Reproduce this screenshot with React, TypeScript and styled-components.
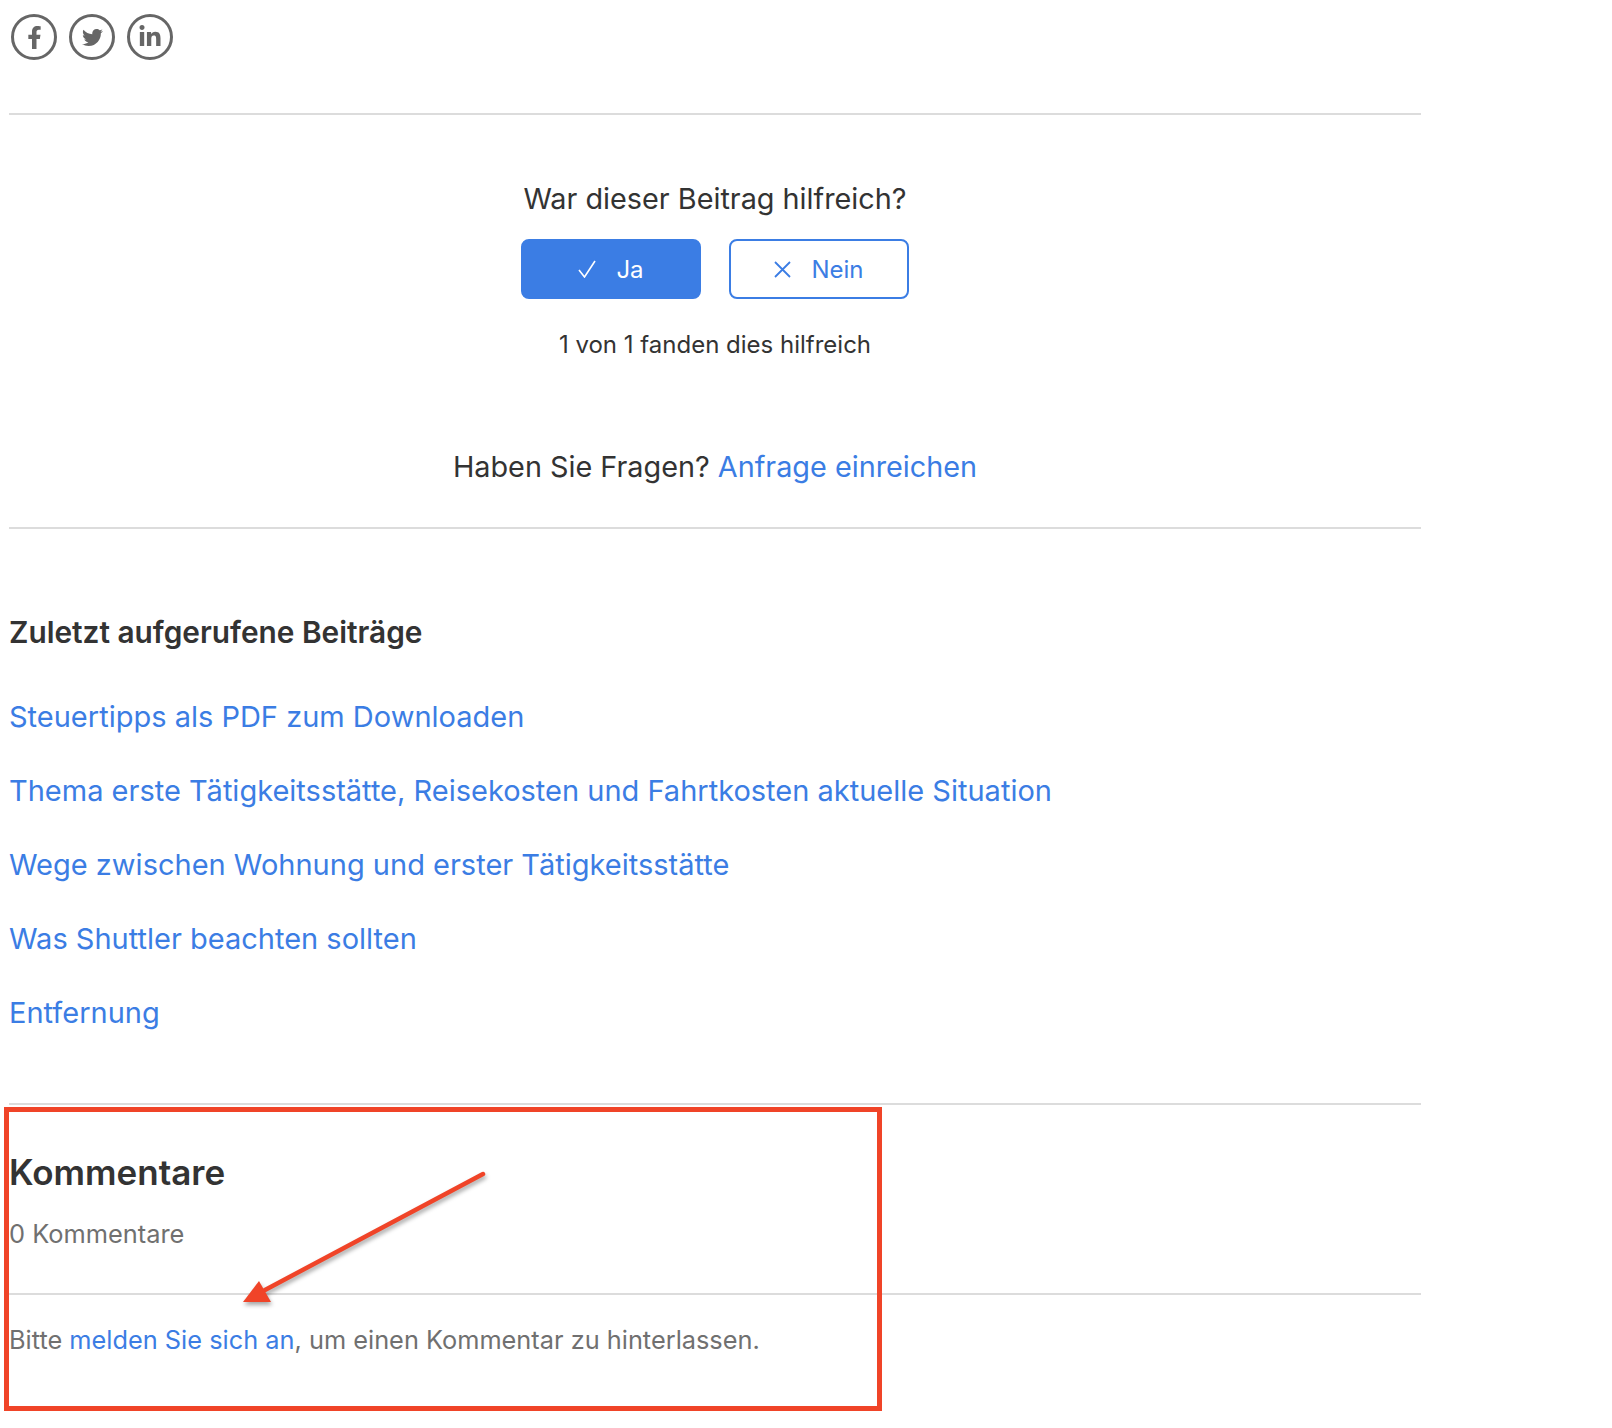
import React from 'react';
import styled, { createGlobalStyle } from 'styled-components';
import { FaFacebookF, FaLinkedinIn, FaTwitter } from 'react-icons/fa';

const GlobalStyle = createGlobalStyle`
  html, body {
    margin: 0;
    background: #fff;
    font-family: Inter, "Noto Sans", sans-serif;
    color: #333;
  }
`;

const blue = '#3b7de4';

const Page = styled.div`
  position: relative;
  width: 1412px;
  height: 1428px;
  margin-left: 9px;
`;

const ShareRow = styled.div`
  display: flex;
  gap: 12px;
  padding: 14px 0 53px 2px;
`;

const ShareIcon = styled.a<{ $size: number }>`
  display: flex;
  align-items: center;
  justify-content: center;
  box-sizing: border-box;
  width: 46px;
  height: 46px;
  border: 3px solid #666;
  border-radius: 50%;
  color: #666;
  font-size: ${(p) => p.$size}px;
`;

const Rule = styled.hr`
  margin: 0;
  border: 0;
  height: 2px;
  background: #dcdcdc;
`;

const Vote = styled.section`
  display: flex;
  flex-direction: column;
  align-items: center;
  padding-top: 64px;
`;

const Question = styled.h2`
  margin: 0;
  font-size: 28.8px;
  font-weight: 400;
  line-height: 40px;
`;

const Buttons = styled.div`
  display: flex;
  gap: 28px;
  margin-top: 20px;
`;

const VoteButton = styled.button<{ $primary?: boolean }>`
  display: flex;
  align-items: center;
  justify-content: center;
  gap: 20px;
  box-sizing: border-box;
  width: 180px;
  height: 60px;
  padding: 0;
  border: 2px solid ${blue};
  border-radius: 8px;
  background: ${(p) => (p.$primary ? blue : '#fff')};
  color: ${(p) => (p.$primary ? '#fff' : blue)};
  font-family: inherit;
  font-size: 24px;
`;

const VoteCount = styled.p`
  margin: 30px 0 0;
  font-size: 24px;
  line-height: 32px;
`;

const AskLine = styled.p`
  margin: 85.5px 0 40.5px;
  font-size: 28.8px;
  line-height: 40px;
  text-align: center;
`;

const Link = styled.a`
  color: ${blue};
  text-decoration: none;
`;

const Recent = styled.section`
  padding: 83.4px 0 70.6px;
`;

const RecentTitle = styled.h3`
  margin: 0 0 44.4px;
  font-size: 29.8px;
  font-weight: 600;
  line-height: 40px;
`;

const RecentList = styled.ul`
  display: flex;
  flex-direction: column;
  gap: 34px;
  margin: 0;
  padding: 0;
  list-style: none;
  font-size: 29px;
  line-height: 40px;
`;

const Comments = styled.section`
  color: #707070;
`;

const CommentsTitle = styled.h2`
  margin: 0;
  padding-top: 43px;
  color: #333;
  font-size: 35px;
  font-weight: 600;
  line-height: 48px;
`;

const CommentCount = styled.p`
  margin: 20px 0 40.5px;
  font-size: 25.4px;
  line-height: 36px;
`;

const CommentHint = styled.p`
  margin: 27px 0 0;
  font-size: 25.35px;
  line-height: 36px;
`;

// the red annotation on top of the screenshot
const Highlight = styled.div`
  position: absolute;
  left: -5px;
  top: 1107px;
  box-sizing: border-box;
  width: 878px;
  height: 304px;
  border: 5px solid #f04428;
`;

const Arrow = styled.svg`
  position: absolute;
  left: 211px;
  top: 1160px;
  overflow: visible;
  filter: drop-shadow(1px 3px 2px rgba(0, 0, 0, 0.35));
`;

const CheckIcon = () => (
  <svg width="18" height="18" viewBox="0 0 18 18" fill="none" stroke="currentColor" strokeWidth="1.6">
    <path d="M1 10L6.5 17L17 1" />
  </svg>
);

const CrossIcon = () => (
  <svg width="17" height="17" viewBox="0 0 17 17" fill="none" stroke="currentColor" strokeWidth="1.8">
    <path d="M1 1L16 16M16 1L1 16" />
  </svg>
);

const recent = [
  'Steuertipps als PDF zum Downloaden',
  'Thema erste Tätigkeitsstätte, Reisekosten und Fahrtkosten aktuelle Situation',
  'Wege zwischen Wohnung und erster Tätigkeitsstätte',
  'Was Shuttler beachten sollten',
  'Entfernung',
];

export default function App() {
  return (
    <Page>
      <GlobalStyle />
      <ShareRow>
        <ShareIcon $size={23}><FaFacebookF /></ShareIcon>
        <ShareIcon $size={21}><FaTwitter /></ShareIcon>
        <ShareIcon $size={24}><FaLinkedinIn /></ShareIcon>
      </ShareRow>
      <Rule />
      <Vote>
        <Question>War dieser Beitrag hilfreich?</Question>
        <Buttons>
          <VoteButton $primary><CheckIcon />Ja</VoteButton>
          <VoteButton><CrossIcon />Nein</VoteButton>
        </Buttons>
        <VoteCount>1 von 1 fanden dies hilfreich</VoteCount>
      </Vote>
      <AskLine>Haben Sie Fragen? <Link href="#">Anfrage einreichen</Link></AskLine>
      <Rule />
      <Recent>
        <RecentTitle>Zuletzt aufgerufene Beiträge</RecentTitle>
        <RecentList>
          {recent.map((title) => (
            <li key={title}><Link href="#">{title}</Link></li>
          ))}
        </RecentList>
      </Recent>
      <Rule />
      <Comments>
        <CommentsTitle>Kommentare</CommentsTitle>
        <CommentCount>0 Kommentare</CommentCount>
        <Rule />
        <CommentHint>Bitte <Link href="#">melden Sie sich an</Link>, um einen Kommentar zu hinterlassen.</CommentHint>
      </Comments>
      <Highlight />
      <Arrow width="270" height="150" viewBox="0 0 270 150">
        <path d="M263 14L45 130" stroke="#f04428" strokeWidth="4.5" strokeLinecap="round" />
        <path d="M39 121L51 142H23Z" fill="#f04428" />
      </Arrow>
    </Page>
  );
}
